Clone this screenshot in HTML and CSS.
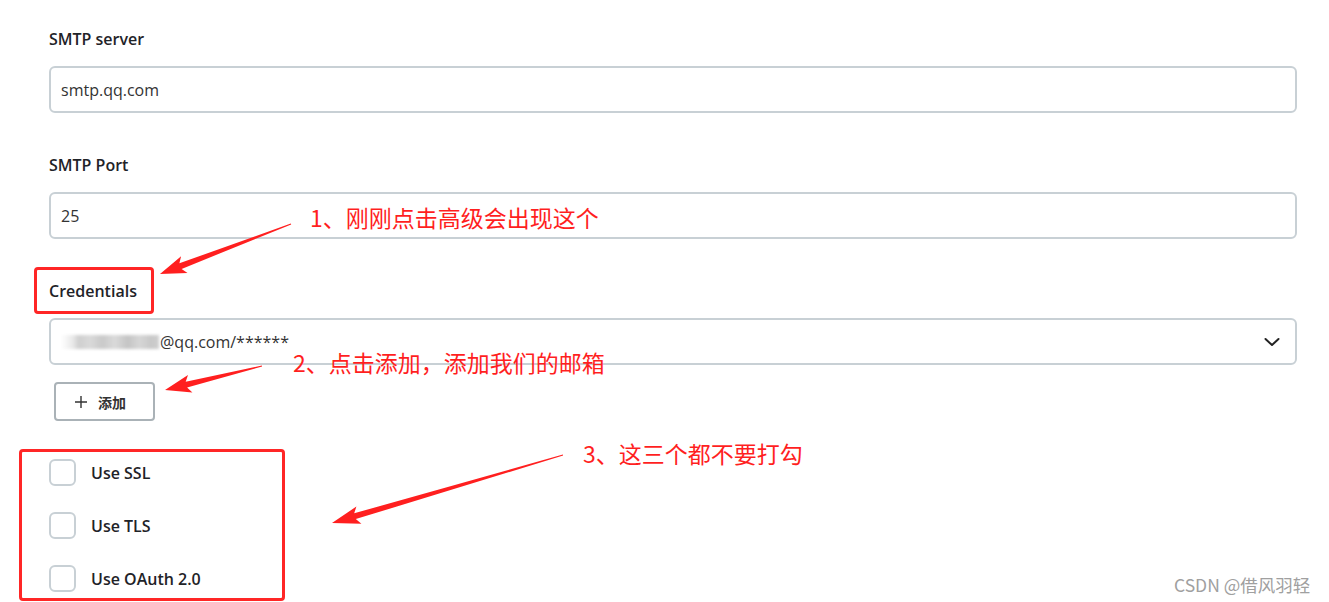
FILE: index.html
```html
<!DOCTYPE html>
<html lang="zh-CN">
<head>
    <meta charset="UTF-8">
    <meta name="viewport" content="width=device-width, initial-scale=1.0">
    <title>Jenkins | Extended E-mail Notification</title>
    <link rel="stylesheet" href="styles.css">
</head>
<body>
    <div class="page">
        <div class="field">
            <label class="field-label" for="smtp-server">SMTP server</label>
            <input class="text-input" id="smtp-server" type="text" value="smtp.qq.com">
        </div>
        <div class="field">
            <label class="field-label" for="smtp-port">SMTP Port</label>
            <input class="text-input" id="smtp-port" type="text" value="25">
        </div>
        <div class="field field-last">
            <label class="field-label">Credentials</label>
            <div class="select">
                <span class="select-value"><span class="blur"></span>@qq.com/******</span>
                <svg class="chevron" width="18" height="18" viewBox="0 0 18 18">
                    <path d="M2.5 6 L9 12 L15.5 6" fill="none" stroke="#222" stroke-width="2" stroke-linecap="round" stroke-linejoin="round"/>
                </svg>
            </div>
            <button class="add-btn" type="button">
                <svg width="14" height="14" viewBox="0 0 14 14">
                    <path d="M7 1 V13 M1 7 H13" stroke="#333" stroke-width="1.4"/>
                </svg>
                <span>添加</span>
            </button>
        </div>
        <div class="checks">
            <label class="check"><span class="box"></span>Use SSL</label>
            <label class="check"><span class="box"></span>Use TLS</label>
            <label class="check"><span class="box"></span>Use OAuth 2.0</label>
        </div>
    </div>

    <!-- screenshot annotations -->
    <div class="mark mark-cred"></div>
    <div class="mark mark-checks"></div>
    <svg class="arrows" width="1329" height="602" viewBox="0 0 1329 602">
        <polygon points="290.8,223.5 179.4,263.3 181.1,256.3 160,274 187.5,273.1 181.6,268.9 291.2,224.5"/>
        <polygon points="261.9,365.5 185.7,381.8 188.0,375.1 165,390 192.4,392.5 187.1,387.6 262.1,366.5"/>
        <polygon points="562.9,454.5 354.2,513.3 356.4,506.5 332,523 361.4,523.7 355.8,519.1 563.1,455.5"/>
    </svg>
    <div class="note note-1">1、刚刚点击高级会出现这个</div>
    <div class="note note-2">2、点击添加，添加我们的邮箱</div>
    <div class="note note-3">3、这三个都不要打勾</div>
    <div class="watermark">CSDN @借风羽轻</div>
</body>
</html>
```

FILE: styles.css
```css
*{
    margin:0;
    padding:0;
    box-sizing:border-box;
}
body{
    position:relative;
    width:1329px;
    height:602px;
    overflow:hidden;
    background:#fff;
    font-family:"Open Sans","Noto Sans","Noto Sans CJK SC",sans-serif;
    color:#1f2328;
}
.page{
    padding:27px 32px 0 49px;
}
.field{
    margin-bottom:40px;
}
.field-last{
    margin-bottom:38px;
}
.field-label{
    display:block;
    font-size:16px;
    line-height:24px;
    font-weight:600;
    margin-bottom:15px;
}
.text-input,.select{
    display:block;
    width:100%;
    height:47px;
    border:2px solid #c8d0d5;
    border-radius:6px;
    padding:0 10px;
    font-family:inherit;
    font-size:16px;
    color:#333;
    background:#fff;
    outline:none;
}
.select{
    display:flex;
    align-items:center;
    justify-content:space-between;
    padding:0 14px 0 10px;
}
.select-value{
    display:flex;
    align-items:center;
}
.blur{
    display:inline-block;
    width:98px;
    height:14px;
    margin-right:1px;
    background:linear-gradient(90deg,#fff 0,#e9e9e9 12%,#cfcfcf 18%,#d9d9d9 30%,#c9c9c9 42%,#dadada 55%,#c4c4c4 68%,#d6d6d6 80%,#c8c8c8 92%,#cfcfcf 100%);
    filter:blur(1.5px);
}
.add-btn{
    display:flex;
    align-items:center;
    gap:10px;
    margin:17px 0 0 5px;
    height:39px;
    width:101px;
    padding:0 0 0 18px;
    border:2px solid #aab2b7;
    border-radius:4px;
    background:#fff;
    font-family:"Noto Sans CJK SC",sans-serif;
    font-size:14px;
    font-weight:700;
    color:#333;
}
.checks{
    display:flex;
    flex-direction:column;
    gap:26px;
}
.check{
    display:flex;
    align-items:center;
    gap:15px;
    height:27px;
    font-size:16px;
    font-weight:600;
}
.box{
    width:27px;
    height:27px;
    border:2px solid #c8d0d5;
    border-radius:6px;
}
.mark{
    position:absolute;
    border:3px solid #ff2626;
    border-radius:4px;
}
.mark-cred{
    left:34px;
    top:267px;
    width:120px;
    height:47px;
}
.mark-checks{
    left:19px;
    top:449px;
    width:266px;
    height:152px;
}
.arrows{
    position:absolute;
    left:0;
    top:0;
    fill:#ff1f1f;
}
.note{
    position:absolute;
    font-family:"Noto Sans CJK SC",sans-serif;
    font-size:23px;
    line-height:23px;
    color:#ff1f1f;
    white-space:nowrap;
}
.note-1{ left:310px; top:206px; }
.note-2{ left:293px; top:351px; }
.note-3{ left:583px; top:442px; }
.watermark{
    position:absolute;
    left:1174px;
    top:572px;
    font-family:"Noto Sans CJK SC",sans-serif;
    font-size:17.5px;
    color:#a0a0a0;
}
```
